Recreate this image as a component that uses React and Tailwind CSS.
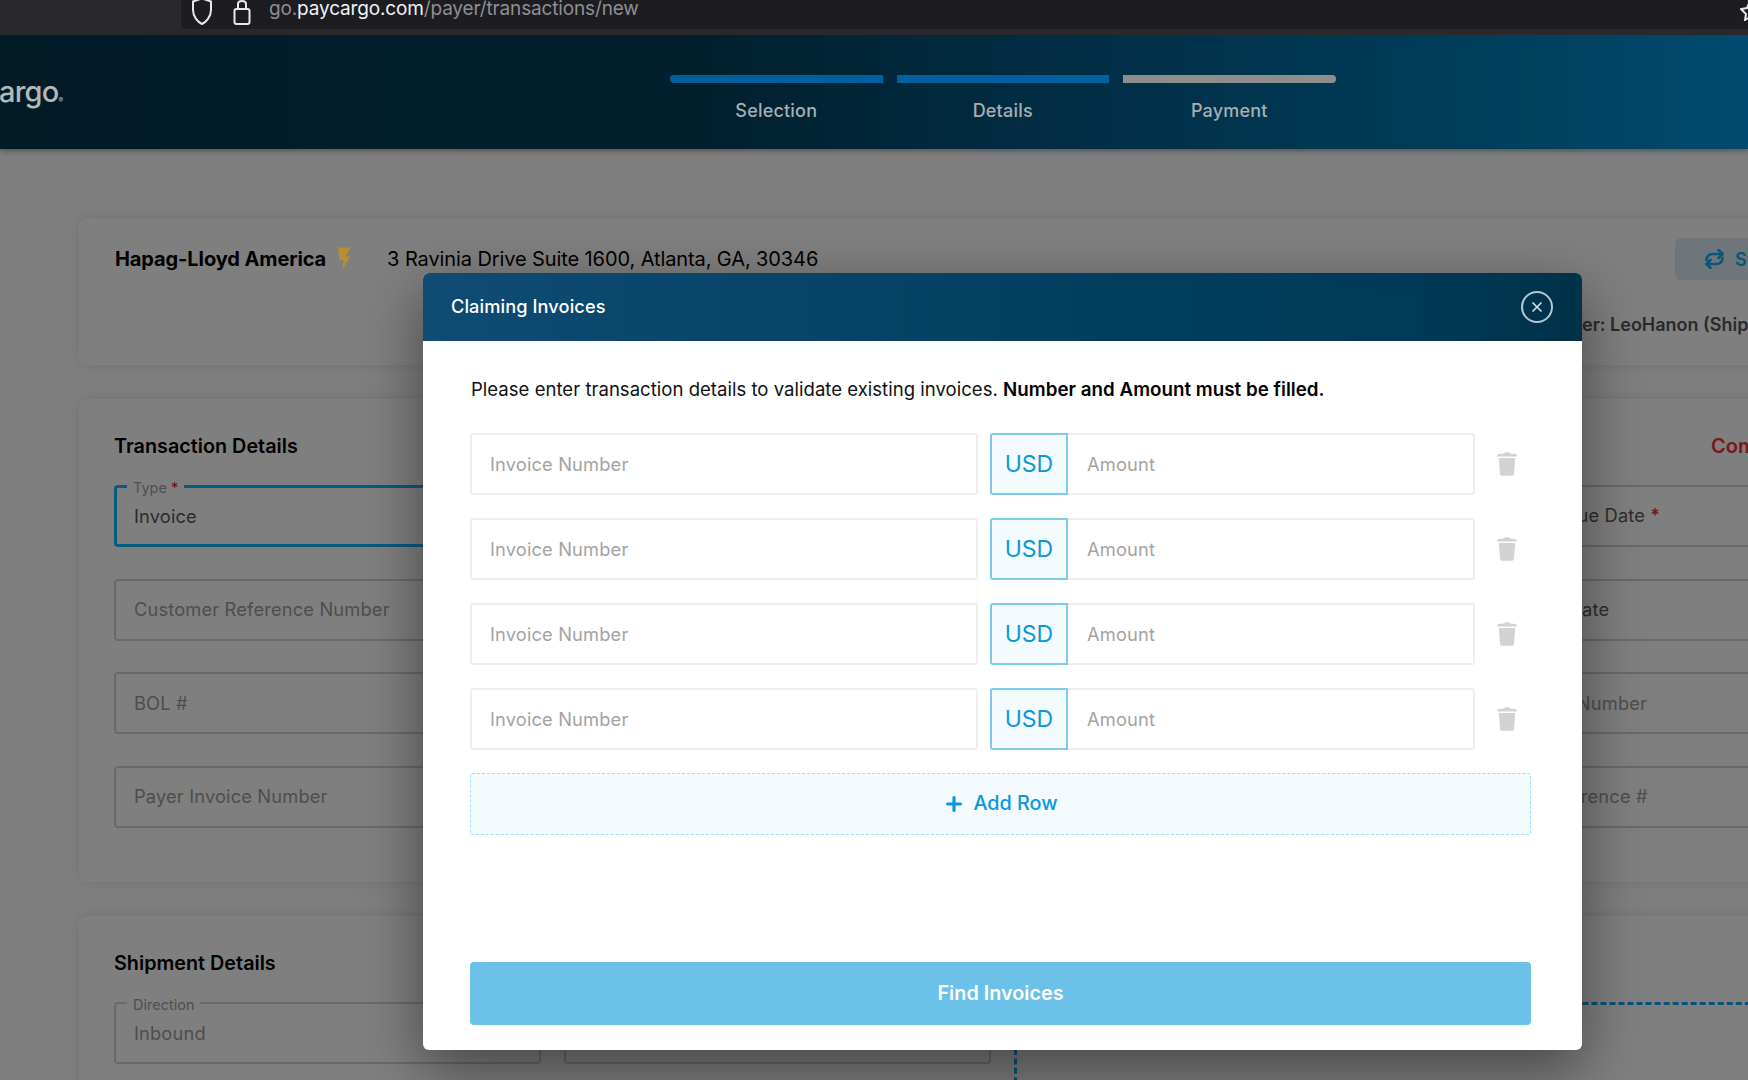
import React from "react";
import { Plus, X } from "lucide-react";

const FONT = { fontFamily: "Inter, 'Liberation Sans', sans-serif" };

function Field({ text, label, req, active, strong, pad = "pl-[18px]" }) {
  return (
    <div
      className={`relative h-[62px] rounded-[4px] flex items-center ${pad} ${
        active ? "border-[3px] border-[#12b4f8]" : "border-2 border-[#d2d2d2]"
      }`}
    >
      {label && (
        <span
          className={`absolute px-[6px] bg-[#fefefe] text-[14.5px] leading-[18px] text-[#a0a0a0] ${
            active ? "left-[10px] top-[-9px]" : "left-[11px] top-[-8px]"
          }`}
        >
          {label}
          {req && <span className="text-[#e0262c]"> *</span>}
        </span>
      )}
      <span
        className={`text-[18.3px] tracking-[0.15px] whitespace-nowrap ${label ? "mt-[2px]" : ""} ${
          strong ? "text-[#565656]" : "text-[#9c9c9c]"
        }`}
      >
        {text}
      </span>
    </div>
  );
}

function Trash() {
  return (
    <svg width="20" height="24" viewBox="0 0 20 24" className="shrink-0">
      <path d="M7 1.6 C7.4 .6 8 .3 9 .3 h2 c1 0 1.6 .3 2 1.3 l5.5 .5 c.8 .1 1.2 .5 1.2 1.2 V4.5 H.3 V3.3 c0-.7 .4-1.1 1.2-1.2 Z" fill="#d2d2d2" />
      <path d="M1.8 6 H18.2 L17 21.8 c-.1 1.2 -.9 1.9 -2 1.9 H5 c-1.1 0 -1.9 -.7 -2 -1.9 Z" fill="#d2d2d2" />
    </svg>
  );
}

function Row() {
  return (
    <div className="flex items-center h-[62px]">
      <div className="w-[508px] h-full border-2 border-[#eeeeee] rounded-[3px] flex items-center pl-[18px] pt-[2px] text-[18.3px] tracking-[0.15px] text-[#a3a3a3]">
        Invoice Number
      </div>
      <div className="ml-[12px] w-[78px] h-full border-2 border-[#7ccbec] rounded-l-[3px] bg-[#f3fbfe] flex items-center justify-center pt-[1px] text-[23px] text-[#0b98d8]">
        USD
      </div>
      <div className="w-[407px] h-full border-2 border-l-0 border-[#eeeeee] rounded-r-[3px] flex items-center pl-[19px] pt-[2px] text-[18.3px] tracking-[0.15px] text-[#a3a3a3]">
        Amount
      </div>
      <div className="ml-[22px]">
        <Trash />
      </div>
    </div>
  );
}

function Step({ label, on, round }) {
  return (
    <div className="w-[212.5px]">
      <div className={`relative z-10 h-[8px] ${round} ${on ? "bg-[#005f9f]" : "bg-[#8e8e8e]"}`} />
      <div className="relative z-10 mt-[14px] text-center text-[18px] font-medium tracking-[0.2px] text-[#a8aeb2]">{label}</div>
    </div>
  );
}

export default function App() {
  return (
    <div className="relative w-[1748px] h-[1080px] overflow-hidden flex flex-col bg-[#fdfdfd]" style={FONT}>
      {/* browser chrome */}
      <div className="h-[35px] shrink-0 bg-[#29282d] relative overflow-hidden">
        <div className="absolute left-[181px] top-[-10px] right-0 h-[39px] bg-[#1c1c21] rounded-bl-[6px] flex items-center">
          <svg width="20" height="28" viewBox="0 0 20 28" className="ml-[11px] mt-[2px]" fill="none" stroke="#e8e8e8" strokeWidth="2">
            <path d="M10 1.5 L19 4.5 V13 C19 20 14 25 10 27 C6 25 1 20 1 13 V4.5 Z" />
          </svg>
          <svg width="18" height="28" viewBox="0 0 18 28" className="ml-[21px] mt-[2px]" fill="none" stroke="#e8e8e8" strokeWidth="2">
            <path d="M5 12 V7 C5 3 13 3 13 7 V12" />
            <rect x="1.5" y="12" width="15" height="15" rx="2" />
          </svg>
          <div className="ml-[18px] mt-[-1px] text-[19px] tracking-[-0.15px] whitespace-nowrap text-[#8f8f93]">
            go.<span className="text-[#f2f2f2]">paycargo.com</span>/payer/transactions/new
          </div>
          <svg width="20" height="26" viewBox="0 0 20 26" className="absolute left-[1559px] top-[5px]" fill="none" stroke="#e8e8e8" strokeWidth="2">
            <path d="M10 6 L13 13 L19 14 L14 19 L15 25 L10 22 L5 25 L6 19 L1 14 L7 13 Z" />
          </svg>
        </div>
      </div>

      <div className="relative flex-1 overflow-hidden">
        {/* header */}
        <header className="relative h-[114px] bg-[linear-gradient(90deg,#02384f_0%,#02405c_40%,#045a88_60%,#0078b0_82%,#0096e0_100%)] shadow-[0_2px_6px_rgba(0,0,0,0.35)]">
          <div className="absolute z-10 left-[-1px] top-[38px] flex items-start text-[29px] leading-[38px] font-medium tracking-[-0.8px] text-[#b4b8ba] overflow-hidden w-[70px]">
            <span>argo</span>
            <span className="text-[7px] leading-[8px] mt-[24px]">®</span>
          </div>
          <div className="flex gap-[14px] pt-[40px] pl-[670px]">
            <Step label="Selection" on round="rounded-l-[4px]" />
            <Step label="Details" on round="" />
            <Step label="Payment" round="rounded-r-[4px]" />
          </div>
        </header>

        {/* page */}
        <main className="w-[1900px] pl-[79px] pt-[69px]">
          <section className="h-[147px] rounded-[8px] bg-[#ffffff] shadow-[0_0_12px_rgba(0,0,0,0.1)] pl-[36px] pr-[196px] relative">
            <div className="flex items-center h-[82px] text-[20px]">
              <span className="font-bold text-[#000000] tracking-[-0.1px]">Hapag-Lloyd America</span>
              <svg width="14" height="24" viewBox="0 0 14 24" className="relative z-10 ml-[11px]">
                <path d="M1 .5 H13.5 L8.5 9.5 H13.5 L5 23 L6.5 13 H2.5 Z" fill="#b58f30" />
              </svg>
              <span className="ml-[36px] tracking-[-0.1px] text-[#000000]">3 Ravinia Drive Suite 1600, Atlanta, GA, 30346</span>
              <div className="absolute left-[1596px] top-[20px] w-[200px] h-[42px] rounded-[6px] bg-[#dcecf7] flex items-center pl-[29px] text-[#0db0f5] font-semibold text-[18px]">
                <svg width="21" height="20" viewBox="0 0 20 20" fill="none" stroke="currentColor" strokeWidth="2.6" strokeLinecap="round" strokeLinejoin="round" className="mr-[10px]">
                  <path d="M2 11 C2 7 5 5 8 5 H18" />
                  <path d="M14 1 L18 5 L14 9" />
                  <path d="M18 9 C18 13 15 15 12 15 H2" />
                  <path d="M6 11 L2 15 L6 19" />
                </svg>
                <span>Switch</span>
              </div>
            </div>
            <div className="absolute left-[1400px] top-[93px] whitespace-nowrap text-[18px] font-semibold text-[#555555]">
              <span className="inline-block w-[103px]"></span>er: LeoHanon (Shipper)
            </div>
          </section>

          <section className="mt-[34px] h-[483px] rounded-[8px] bg-[#ffffff] shadow-[0_0_12px_rgba(0,0,0,0.1)] pl-[35px] pt-[34px] relative">
            <h2 className="text-[19.8px] leading-[26px] font-semibold text-[#000000]">Transaction Details</h2>
            <span className="absolute left-[1632px] top-[34px] text-[20px] leading-[26px] font-semibold text-[#f03035]">Complete</span>
            <div className="mt-[26px] grid grid-cols-[427px_427px_427px_427px] gap-x-[23px] gap-y-[31.67px]">
              <Field text="Invoice" label="Type" req active strong pad="pl-[17px]" />
              <Field text="Vendor" />
              <Field text="Reference" />
              <Field text={<span className="text-[#5c5c5c]">Invoice Due Date<span className="text-[#e0262c]"> *</span></span>} pad="pl-[30px]" />
              <Field text="Customer Reference Number" />
              <Field text="Account" />
              <Field text="Currency" />
              <Field text={<span className="text-[#5c5c5c]">Payment Date</span>} pad="pl-[21px]" />
              <Field text="BOL #" />
              <Field text="Container" />
              <Field text="Booking" />
              <Field text="Container Number" pad="pl-[20px]" />
              <Field text="Payer Invoice Number" />
              <Field text="Notes" />
              <Field text="Vessel" />
              <Field text="Payer Reference #" pad="pl-[20px]" />
            </div>
          </section>

          <section className="mt-[34px] h-[300px] rounded-[8px] bg-[#ffffff] shadow-[0_0_12px_rgba(0,0,0,0.1)] pl-[35px] pt-[34px] relative">
            <h2 className="text-[19.8px] leading-[26px] font-semibold text-[#000000]">Shipment Details</h2>
            <div className="mt-[26px] flex gap-[23px]">
              <div className="w-[427px]">
                <Field text="Inbound" label="Direction" />
              </div>
              <div className="w-[427px]">
                <Field text="Port" />
              </div>
              <div className="w-[800px] h-[100px] border-t-[3px] border-l-[3px] border-dashed border-[#0aa8f0]" />
            </div>
          </section>
        </main>

        {/* backdrop */}
        <div className="absolute inset-0 bg-[#000000]/50" />

        {/* modal */}
        <div className="absolute z-20 left-[423px] top-[238px] w-[1159px] h-[777px] rounded-[6px] bg-[#ffffff] shadow-[0_20px_60px_rgba(0,0,0,0.45)] flex flex-col overflow-hidden">
          <div className="h-[68px] shrink-0 bg-[linear-gradient(90deg,#0f4b73_0%,#013e5e_60%,#003a58_85%,#003248_100%)] flex items-center justify-between pl-[28px] pr-[29px]">
            <span className="text-[18.2px] font-medium tracking-[0.1px] text-[#ffffff]">Claiming Invoices</span>
            <div className="w-[32px] h-[32px] rounded-full border-2 border-[#b5c8d2] flex items-center justify-center">
              <X size={16} strokeWidth={2.5} color="#d8e0e4" />
            </div>
          </div>
          <div className="flex-1 pl-[47px] pr-[51px] pt-[36px] pb-[25px] flex flex-col">
            <p className="ml-[1px] text-[18.55px] leading-[24px] tracking-[0.02px] text-[#111111]">
              Please enter transaction details to validate existing invoices.{" "}
              <b className="font-semibold text-[18.75px] text-[#000000]">Number and Amount must be filled.</b>
            </p>
            <div className="mt-[31px] flex flex-col gap-[23px]">
              <Row />
              <Row />
              <Row />
              <Row />
            </div>
            <div className="mt-[23px] h-[62px] border-[1.5px] border-dashed border-[#9fdff9] bg-[#f3fbfe] rounded-[2px] flex items-center justify-center text-[19.8px] font-medium text-[#0b98d8]">
              <Plus size={22} strokeWidth={3.5} className="mr-[8px]" />
              Add Row
            </div>
            <button className="mt-auto h-[63px] rounded-[4px] bg-[#6cc1e8] text-[19.8px] font-semibold text-[#ffffff]">
              Find Invoices
            </button>
          </div>
        </div>
      </div>
    </div>
  );
}
